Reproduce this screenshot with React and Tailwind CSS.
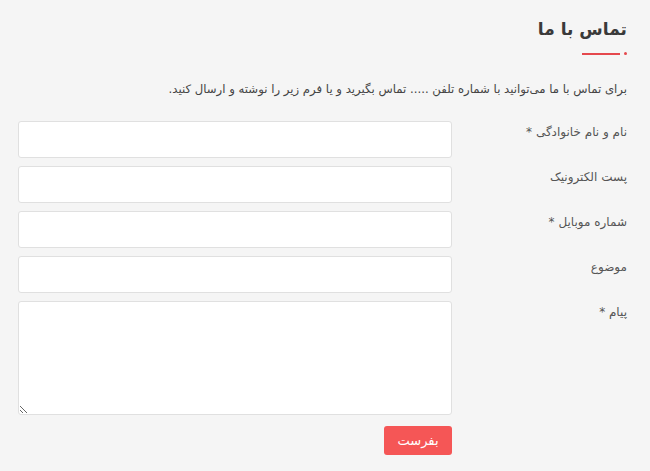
export default function App() {
  const fields = [
    { label: 'نام و نام خانوادگی *' },
    { label: 'پست الکترونیک' },
    { label: 'شماره موبایل *' },
    { label: 'موضوع' },
  ];

  return (
    <div
      dir="rtl"
      className="min-h-[471px] w-[650px] bg-[#f5f5f5] pr-[23px] pl-[18px] pt-[14px] text-[#444]"
      style={{ fontFamily: '"DejaVu Sans", sans-serif' }}
    >
      <h2 className="text-[17px] font-bold leading-[30px] text-[#3a3a3a]">تماس با ما</h2>
      <div className="mt-[8px] flex items-center gap-[4px]">
        <span className="h-[3px] w-[3px] rounded-full bg-[#e5484d]"></span>
        <span className="h-[2px] w-[38px] bg-[#e5484d]"></span>
      </div>
      <p className="mt-[24px] text-[11.7px] leading-[20px] text-[#444]">
        برای تماس با ما می‌توانید با شماره تلفن ..... تماس بگیرید و یا فرم زیر را نوشته و ارسال کنید.
      </p>

      <form className="mt-[22px] grid grid-cols-[160px_1fr] gap-x-[15px] gap-y-[8px]">
        {fields.map((f) => (
          <div key={f.label} className="contents">
            <label className="pt-[1px] text-[12px] leading-[20px] text-[#555]">{f.label}</label>
            <input
              type="text"
              className="h-[37px] w-full rounded-[3px] border border-[#e0e0e0] bg-white px-3 outline-none"
            />
          </div>
        ))}
        <label className="pt-[1px] text-[12px] leading-[20px] text-[#555]">پیام *</label>
        <textarea className="h-[114px] w-full rounded-[3px] border border-[#e0e0e0] bg-white px-3 outline-none"></textarea>
        <div></div>
        <div className="mt-[3px] flex">
          <button
            type="button"
            className="h-[29px] w-[68px] rounded-[3px] bg-[#f55656] text-[13px] text-white"
          >
            بفرست
          </button>
        </div>
      </form>
    </div>
  );
}
